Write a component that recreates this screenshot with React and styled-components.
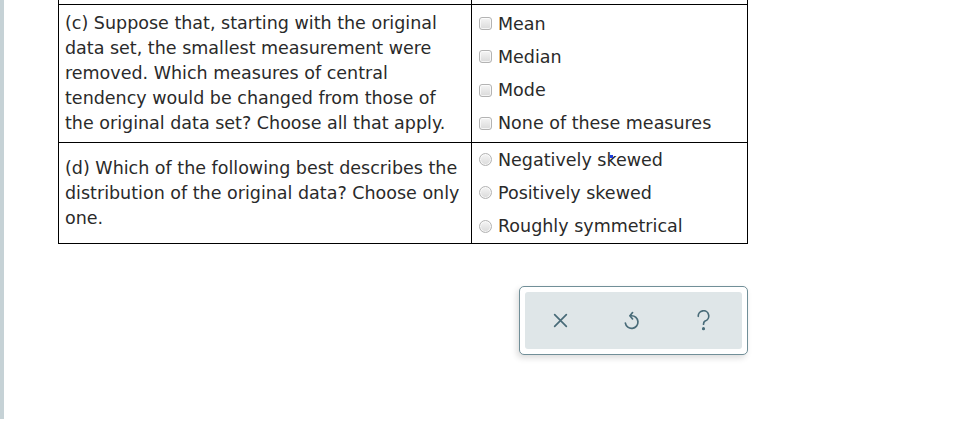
import React from "react";
import styled, { createGlobalStyle } from "styled-components";

const Global = createGlobalStyle`
  html, body { margin: 0; padding: 0; background: #fff; }
  body { font-family: "DejaVu Sans", Verdana, sans-serif; color: #222; }
`;

const Page = styled.div`
  display: flex;
  width: 969px;
  height: 421px;
  overflow: hidden;
`;

const SideBar = styled.div`
  width: 4px;
  height: 419px;
  background: #c6d2d6;
  flex-shrink: 0;
`;

const Main = styled.div`
  padding-left: 54px;
  width: 690px;
  display: flex;
  flex-direction: column;
`;

const Table = styled.div`
  display: grid;
  grid-template-columns: 414px 276px;
`;

const Cell = styled.div`
  box-sizing: border-box;
  border-bottom: 1px solid #000;
  border-right: 1px solid #000;
  ${(p) => (p.$left ? "border-left: 1px solid #000;" : "")}
  height: ${(p) => p.$h}px;
  display: flex;
  flex-direction: column;
  justify-content: center;
`;

const Question = styled.div`
  padding: 0 6px;
  font-size: 17.5px;
  line-height: 25px;
  white-space: nowrap;
  color: #2a2a2a;
`;

const Options = styled.div`
  padding-left: 6px;
  display: flex;
  flex-direction: column;
  position: relative;
`;

const Option = styled.label`
  display: flex;
  align-items: center;
  height: 33.3px;
  font-size: 17.5px;
  color: #2a2a2a;
  white-space: nowrap;
`;

const Box = styled.input`
  appearance: none;
  -webkit-appearance: none;
  box-sizing: border-box;
  width: 13px;
  height: 13px;
  margin: 0 6px 0 1px;
  border: 1px solid #b3b3b3;
  border-radius: ${(p) => (p.type === "radio" ? "50%" : "3px")};
  background: linear-gradient(#f5f5f5, #dadada);
  box-shadow: inset 0 0 0 1px rgba(255, 255, 255, 0.7);
  flex-shrink: 0;
`;

const Caret = styled.span`
  position: absolute;
  left: 138px;
  top: 12px;
  width: 3px;
  height: 3px;
  background: #1a3fe0;
  z-index: 2;
`;

const ToolRow = styled.div`
  display: flex;
  justify-content: flex-end;
  margin-top: 42px;
`;

const Toolbar = styled.div`
  box-sizing: border-box;
  width: 229px;
  height: 69px;
  border: 1px solid #718f98;
  border-radius: 5px;
  padding: 5px;
  background: #fff;
  box-shadow: -2px 3px 6px rgba(0, 0, 0, 0.14);
`;

const ToolInner = styled.div`
  height: 100%;
  border-radius: 3px;
  background: #dfe6e8;
  display: grid;
  grid-template-columns: repeat(3, 1fr);
  padding-right: 3px;
  align-items: center;
  justify-items: center;
`;

const IconBtn = styled.button`
  border: none;
  background: none;
  padding: 0;
  display: flex;
  align-items: center;
  justify-content: center;
  color: #486b78;
  cursor: pointer;
`;

export default function App() {
  return (
    <>
      <Global />
      <Page>
        <SideBar />
        <Main>
          <Table>
            <Cell $left $h={5} />
            <Cell $h={5} />

            <Cell $left $h={138}>
              <Question>
                (c) Suppose that, starting with the original
                <br />
                data set, the smallest measurement were
                <br />
                removed. Which measures of central
                <br />
                tendency would be changed from those of
                <br />
                the original data set? Choose all that apply.
              </Question>
            </Cell>
            <Cell $h={138}>
              <Options>
                {["Mean", "Median", "Mode", "None of these measures"].map((t) => (
                  <Option key={t}>
                    <Box type="checkbox" />
                    {t}
                  </Option>
                ))}
              </Options>
            </Cell>

            <Cell $left $h={101}>
              <Question>
                (d) Which of the following best describes the
                <br />
                distribution of the original data? Choose only
                <br />
                one.
              </Question>
            </Cell>
            <Cell $h={101}>
              <Options>
                <Caret />
                {["Negatively skewed", "Positively skewed", "Roughly symmetrical"].map((t) => (
                  <Option key={t}>
                    <Box type="radio" name="dist" />
                    {t}
                  </Option>
                ))}
              </Options>
            </Cell>
          </Table>

          <ToolRow>
            <Toolbar>
              <ToolInner>
                <IconBtn aria-label="Clear">
                  <svg width="17" height="17" viewBox="0 0 16 16" fill="none" stroke="currentColor" strokeWidth="1.6" strokeLinecap="round">
                    <path d="M2.5 2.5 L13.5 13.5 M13.5 2.5 L2.5 13.5" />
                  </svg>
                </IconBtn>
                <IconBtn aria-label="Undo">
                  <svg width="17" height="19" viewBox="0 0 16 18" fill="none" stroke="currentColor" strokeWidth="1.6" strokeLinecap="round" strokeLinejoin="round">
                    <path d="M7 4.5 H8 A6 6 0 1 1 2.2 11.5" />
                    <path d="M9 1.5 L6.5 4.5 L9 7.5" />
                  </svg>
                </IconBtn>
                <IconBtn aria-label="Help">
                  <svg width="15" height="21" viewBox="0 0 14 20" fill="none" stroke="currentColor" strokeWidth="1.6" strokeLinecap="round" strokeLinejoin="round">
                    <path d="M2 6 A5 5 0 1 1 8.5 10.5 C7.2 11.2 7 12 7 13.5" />
                    <circle cx="7" cy="17.8" r="0.7" fill="currentColor" />
                  </svg>
                </IconBtn>
              </ToolInner>
            </Toolbar>
          </ToolRow>
        </Main>
      </Page>
    </>
  );
}
